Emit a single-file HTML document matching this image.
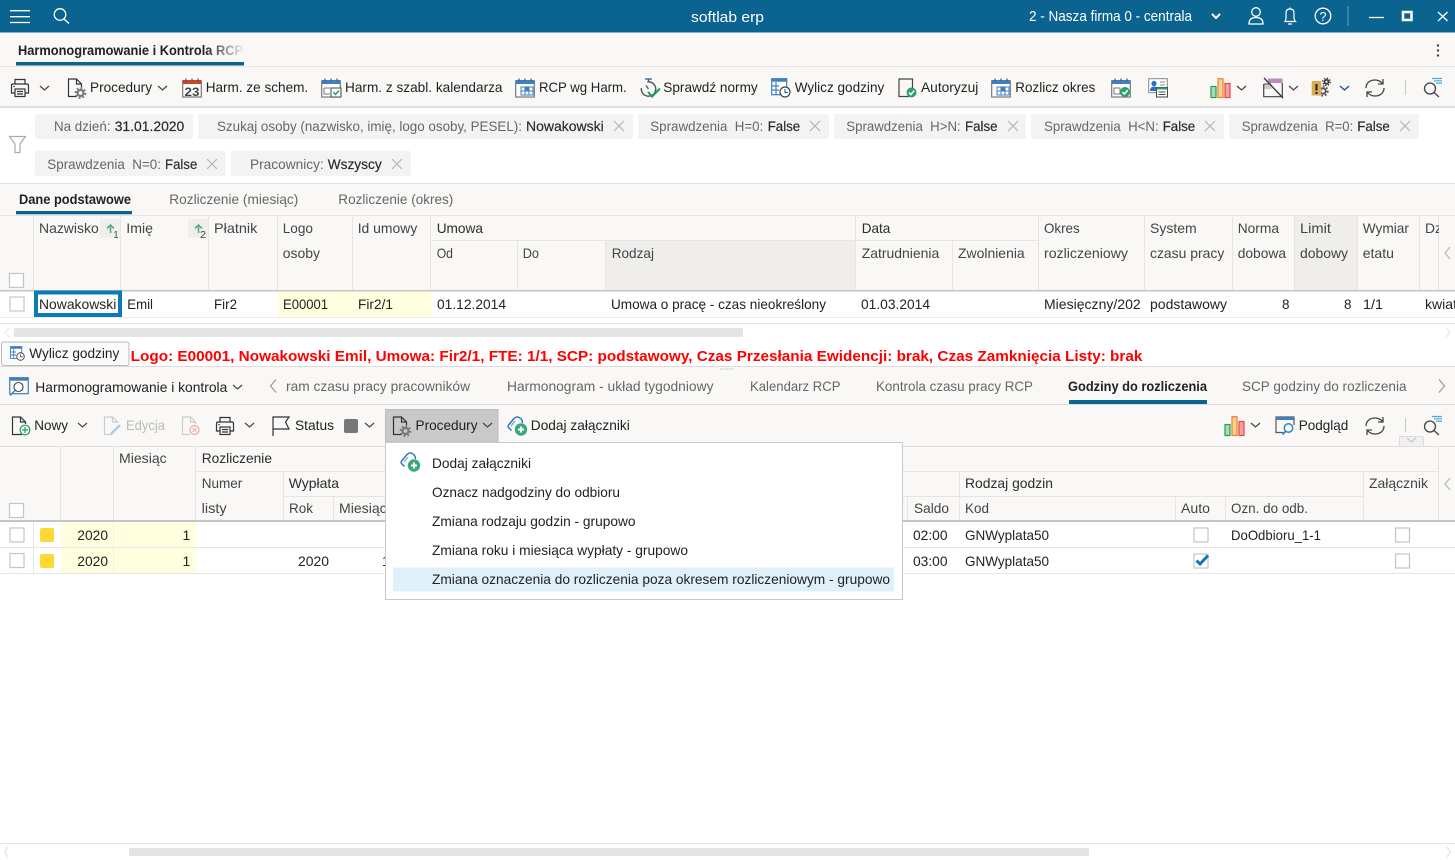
<!DOCTYPE html>
<html lang="pl"><head><meta charset="utf-8"><title>softlab erp</title>
<style>
html,body{margin:0;padding:0;background:#fff;overflow:hidden;width:1455px;height:860px}
svg{display:block}
text{font-family:"Liberation Sans",sans-serif;font-size:14px;fill:#222;white-space:pre}
.w{fill:#fff}.g{fill:#666}.h{fill:#444}.b{font-weight:700}.d{fill:#bbb}.k{fill:#2c2c2c;stroke:#2c2c2c;stroke-width:.2}
.l{stroke:#e6e5e3;stroke-width:1;fill:none}
.cb{fill:#fff;stroke:#c4c4c4;stroke-width:1.2}
.ch{fill:none;stroke:#444;stroke-width:1.2}
.x{stroke:#b5b5b5;stroke-width:1.2;fill:none}
</style></head><body>
<svg xmlns="http://www.w3.org/2000/svg" width="1455" height="860" viewBox="0 0 1455 860">
<defs>
<linearGradient id="fade" gradientUnits="userSpaceOnUse" x1="205" y1="0" x2="244" y2="0"><stop offset="0" stop-color="#222"/><stop offset="1" stop-color="#f0f0f0"/></linearGradient>
<clipPath id="cDz"><rect x="1420" y="216" width="19" height="40"/></clipPath>
<g id="chev"><path class="ch" d="M0 0L4.5 4L9 0"/></g>
<g id="print" fill="none" stroke="#333" stroke-width="1.2"><path d="M5 6V1.5H15V6"/><path d="M5 15H1.5V7.5Q1.500 6 3 6H17Q18.500 6 18.500 7.500V15H15"/><rect x="5" y="11" width="10" height="7.500"/><path d="M7 13.500H13M7 16H13"/><path d="M3 8.500H5" stroke="#2a7ab8"/></g>
<g id="gear"><circle r="3" fill="none" stroke="#777" stroke-width="2.200"/><circle r="5" fill="none" stroke="#777" stroke-width="1.800" stroke-dasharray="1.900 2"/></g>
<g id="docg"><path d="M10 18.500H1.500V1H9.500L14.500 6V9M9.500 1V6H14.500" fill="none" stroke="#333" stroke-width="1.200"/><use href="#gear" x="13.500" y="15"/></g>
<g id="cal"><rect x=".7" y="3" width="18.600" height="16" fill="#fff" stroke="#777" stroke-width="1.200"/><rect x=".7" y="2" width="18.600" height="4" fill="#3f7fbf"/><path d="M4 .5V3M10 .5V3M16 .5V3" stroke="#555" stroke-width="1.200"/></g>
<g id="grid"><rect x="6" y="9" width="12" height="8" fill="#fff" stroke="#3f7fbf"/><path d="M6 13H18M10 9V17M14 9V17" stroke="#3f7fbf"/><rect x="10" y="9" width="4" height="4" fill="#3f7fbf"/></g>
<g id="okc"><circle r="5" fill="#2aa071"/><path d="M-2.500 0L-.7 2L2.700 -1.800" fill="none" stroke="#fff" stroke-width="1.600"/></g>
<g id="bars" stroke-width="1.200"><rect x="1" y="8.500" width="5" height="11" fill="#a8dcb8" stroke="#20a058"/><rect x="8" y=".7" width="5" height="18.800" fill="#fbd28c" stroke="#e8803a"/><rect x="15" y="5.500" width="5" height="14" fill="#f6a0a0" stroke="#e44848"/></g>
<g id="ref" fill="none" stroke="#444" stroke-width="1.300"><path d="M1 10C1 5 5 2 10 2C13 2 16 3.500 18 6M18 1V6H13"/><path d="M19 10C19 15 15 18 10 18C7 18 4 16.500 2 14M2 19V14H7"/></g>
<g id="srch" fill="none"><circle cx="7" cy="11.500" r="5.500" stroke="#444" stroke-width="1.300"/><path d="M11 15.500L16 20" stroke="#444" stroke-width="1.300"/><path d="M9 1.500H19M11 3.800H19M13 6.100H19" stroke="#4aa8e0" stroke-width="1.200"/></g>
<g id="wyl"><rect x=".7" y=".7" width="15" height="16" fill="#fff" stroke="#3f7fbf" stroke-width="1.200"/><rect x=".7" y=".7" width="15" height="3" fill="#3f7fbf"/><path d="M1 8H8M1 12H8M5 4V17" stroke="#3f7fbf" stroke-width="1.200"/><circle cx="14" cy="14" r="5" fill="#fff" stroke="#444" stroke-width="1.200"/><path d="M14 11V14.500H17" fill="none" stroke="#2a6ab0" stroke-width="1.200"/></g>
<g id="cloud"><path d="M4.500 14.500L1.500 11.500Q.5 10 2 8.500L7 2.500Q9.500 0 12 1.500Q15.500 3 15.500 7" fill="none" stroke="#2a70b8" stroke-width="1.400"/><path d="M8 5L4 10" stroke="#7aa8d8" stroke-width="1.400"/><circle cx="14" cy="13.500" r="6.200" fill="#39a87c"/><path d="M14 10.500V16.500M11 13.500H17" stroke="#fff" stroke-width="2"/></g>
</defs>

<!-- top bar -->
<rect width="1455" height="32" fill="#0b6490"/><rect y="32" width="1455" height="1" fill="#7fb0c8"/>
<path d="M10 10.700H30M10 16.700H30M10 22.500H30" stroke="#fff" stroke-width="1.300"/>
<circle cx="60" cy="14.500" r="5.800" fill="none" stroke="#fff" stroke-width="1.300"/><path d="M64 19L69 23.500" stroke="#fff" stroke-width="1.300"/>
<text x="691" y="22" textLength="73" lengthAdjust="spacingAndGlyphs" class="w" style="font-size:15px">softlab erp</text>
<text x="1029" y="21" textLength="163" lengthAdjust="spacingAndGlyphs" class="w" style="font-size:14.5px">2 - Nasza firma 0 - centrala</text>
<path d="M1212 14L1216 18L1220 14" fill="none" stroke="#fff" stroke-width="2"/>
<circle cx="1256" cy="12" r="4.300" fill="none" stroke="#fff" stroke-width="1.300"/><path d="M1249 24Q1249 17.500 1256 17.500Q1263 17.500 1263 24Z" fill="none" stroke="#fff" stroke-width="1.300"/>
<path d="M1285 21.500Q1286 20 1286 17V13Q1286 9 1290 9Q1294 9 1294 13V17Q1294 20 1295.500 21.500ZM1290 9V7.500M1288 24H1292" fill="none" stroke="#fff" stroke-width="1.200"/>
<circle cx="1323" cy="16" r="7.800" fill="none" stroke="#fff" stroke-width="1.300"/>
<text x="1319.500" y="21" textLength="7" lengthAdjust="spacingAndGlyphs" class="w" style="font-size:13px">?</text>
<rect x="1347" y="6" width="2" height="20" fill="#3a82a8"/>
<path d="M1369 17.500H1384" stroke="#fff" stroke-width="1.300"/>
<rect x="1403" y="12" width="8.500" height="8" fill="none" stroke="#fff" stroke-width="2.500"/>
<path d="M1438 12L1447.500 21M1447.500 12L1438 21" stroke="#fff" stroke-width="1.300"/>

<!-- tab strip -->
<rect y="33" width="1455" height="73" fill="#f9f8f6"/>
<text x="18" y="55" textLength="225" lengthAdjust="spacingAndGlyphs" class="b" style="font-size:13.500px;fill:url(#fade)">Harmonogramowanie i Kontrola RCP</text>
<rect x="16" y="62" width="228" height="3.500" fill="#0b6490"/>
<rect y="66" width="1455" height="1" fill="#e8e7e5"/>
<circle cx="1438" cy="45.500" r="1.200" fill="#444"/><circle cx="1438" cy="50.500" r="1.200" fill="#444"/><circle cx="1438" cy="55.500" r="1.200" fill="#444"/>

<!-- toolbar 1 -->
<use href="#print" x="10" y="78"/><use href="#chev" x="40" y="86"/>
<use href="#docg" x="67" y="78"/>
<text x="90" y="92" textLength="62" lengthAdjust="spacingAndGlyphs">Procedury</text><use href="#chev" x="158" y="86"/>
<g transform="translate(182 78)"><rect x=".7" y="3" width="18.600" height="16" fill="#fff" stroke="#777" stroke-width="1.200"/><rect x=".7" y="2" width="18.600" height="4" fill="#c9402c"/><path d="M4 .5V3M10 .5V3M16 .5V3" stroke="#555" stroke-width="1.200"/></g>
<text x="184.500" y="96" textLength="15" lengthAdjust="spacingAndGlyphs" class="b" style="font-size:12px;fill:#444">23</text>
<text x="205.700" y="92" textLength="102.500" lengthAdjust="spacingAndGlyphs">Harm. ze schem.</text>
<use href="#cal" x="321" y="78"/><path d="M324 88H330M324 88V94H330" fill="none" stroke="#777"/><rect x="331" y="88" width="10" height="9" fill="#fff" stroke="#444"/><path d="M333.500 92L335.500 94.500L339 90.500" fill="none" stroke="#2aa071" stroke-width="1.500"/>
<text x="345" y="92" textLength="157.500" lengthAdjust="spacingAndGlyphs">Harm. z szabl. kalendarza</text>
<use href="#cal" x="515" y="78"/><use href="#grid" x="515" y="78"/>
<text x="539" y="92" textLength="87.700" lengthAdjust="spacingAndGlyphs">RCP wg Harm.</text>
<g transform="translate(640 78)" fill="none"><circle cx="8.500" cy="11" r="7.200" stroke="#555" stroke-width="1.400" stroke-dasharray="26 9" transform="rotate(-20 8.500 11)"/><path d="M5 1H12M8.500 1V3.500M8.500 11L6 7.500" stroke="#2a5a90" stroke-width="1.300"/><path d="M8 14L12 18.500L20 10.500" stroke="#1a9a60" stroke-width="2"/></g>
<text x="663.300" y="92" textLength="94.400" lengthAdjust="spacingAndGlyphs">Sprawdź normy</text>
<use href="#wyl" x="771" y="78"/>
<text x="794.700" y="92" textLength="89.600" lengthAdjust="spacingAndGlyphs">Wylicz godziny</text>
<path d="M909 96.500H899V79H912.500V90" fill="none" stroke="#444" stroke-width="1.200"/><use href="#okc" x="911.500" y="92.500"/>
<text x="921" y="92" textLength="57.300" lengthAdjust="spacingAndGlyphs">Autoryzuj</text>
<use href="#cal" x="991" y="78"/><use href="#grid" x="991" y="78"/>
<text x="1015.300" y="92" textLength="80" lengthAdjust="spacingAndGlyphs">Rozlicz okres</text>
<use href="#cal" x="1111" y="78"/><path d="M1114 88H1120V94H1114Z" fill="none" stroke="#777"/><use href="#okc" x="1125" y="92"/>
<g transform="translate(1148 78)"><rect x=".7" y=".7" width="18.600" height="14" fill="#fff" stroke="#888"/><circle cx="6" cy="5.500" r="2.600" fill="#2a70c0"/><path d="M2 13Q2 8.500 6 8.500Q10 8.500 10 13Z" fill="#2a70c0"/><path d="M12 4H17M12 7H17" stroke="#888"/><rect x="8.500" y="9.500" width="11" height="9.500" fill="#fff" stroke="#444"/><rect x="8.500" y="9.500" width="11" height="2" fill="#2aa071"/><path d="M10.500 14H17.500M10.500 16.500H17.500" stroke="#444"/></g>
<use href="#bars" x="1210" y="78"/><use href="#chev" x="1237" y="86"/>
<g transform="translate(1263 78)" fill="none"><rect x="5" y=".5" width="14.500" height="4.500" fill="#c088c0"/><rect x="1" y="6" width="7.500" height="5" fill="#ccc"/><path d="M.7 6V18.700H19.300V5" stroke="#444" stroke-width="1.200"/><path d="M.7 6H8" stroke="#555"/><path d="M1 0L20 20" stroke="#333" stroke-width="1.300"/></g>
<use href="#chev" x="1289" y="86"/>
<g transform="translate(1311 78)"><circle cx="12" cy="13" r="2.800" fill="none" stroke="#555" stroke-width="2"/><circle cx="12" cy="13" r="4.800" fill="none" stroke="#555" stroke-width="1.700" stroke-dasharray="1.800 1.900"/><rect x=".7" y="3" width="9.500" height="14.500" rx="1" fill="#dcaa50"/><path d="M5.500 6V12.500M5.500 14V16" stroke="#222" stroke-width="2"/><circle cx="15.500" cy="3.800" r="2" fill="none" stroke="#333" stroke-width="1.600"/><circle cx="15.500" cy="3.800" r="3.600" fill="none" stroke="#333" stroke-width="1.400" stroke-dasharray="1.400 1.450"/></g>
<path d="M1340 86L1344.500 90L1349 86" fill="none" stroke="#1f4f90" stroke-width="1.300"/>
<use href="#ref" x="1365" y="78"/>
<rect x="1405" y="80" width="1" height="15" fill="#c8c8c8"/>
<use href="#srch" x="1423" y="77"/>
<rect y="106" width="1455" height="2" fill="#dedddb"/>

<!-- filters -->
<path d="M9.500 136.500H25.500L20 144V152.500H15V144Z" fill="none" stroke="#aaa" stroke-width="1.200"/>
<g fill="#f3f3f3">
<rect x="35" y="114" width="158" height="25" rx="2"/><rect x="198" y="114" width="435" height="25" rx="2"/><rect x="638" y="114" width="191" height="25" rx="2"/><rect x="834" y="114" width="192" height="25" rx="2"/><rect x="1031" y="114" width="193" height="25" rx="2"/><rect x="1229" y="114" width="190" height="25" rx="2"/><rect x="35" y="151" width="191" height="25" rx="2"/><rect x="231" y="151" width="180" height="25" rx="2"/>
</g>
<text x="54" y="131" textLength="56.500" lengthAdjust="spacingAndGlyphs" class="g">Na dzień:</text><text x="114.700" y="131" textLength="69.600" lengthAdjust="spacingAndGlyphs" class="k">31.01.2020</text>
<text x="217" y="131" textLength="305" lengthAdjust="spacingAndGlyphs" class="g">Szukaj osoby (nazwisko, imię, logo osoby, PESEL):</text><text x="526" y="131" textLength="77.700" lengthAdjust="spacingAndGlyphs" class="k">Nowakowski</text>
<text x="650.300" y="131" textLength="113" lengthAdjust="spacingAndGlyphs" class="g">Sprawdzenia  H=0:</text><text x="767.700" y="131" textLength="32.500" lengthAdjust="spacingAndGlyphs" class="k">False</text>
<text x="846.300" y="131" textLength="114.400" lengthAdjust="spacingAndGlyphs" class="g">Sprawdzenia  H&gt;N:</text><text x="965" y="131" textLength="32.500" lengthAdjust="spacingAndGlyphs" class="k">False</text>
<text x="1044" y="131" textLength="114.700" lengthAdjust="spacingAndGlyphs" class="g">Sprawdzenia  H&lt;N:</text><text x="1162.700" y="131" textLength="32.500" lengthAdjust="spacingAndGlyphs" class="k">False</text>
<text x="1241.700" y="131" textLength="111.600" lengthAdjust="spacingAndGlyphs" class="g">Sprawdzenia  R=0:</text><text x="1357.300" y="131" textLength="32.500" lengthAdjust="spacingAndGlyphs" class="k">False</text>
<text x="47.300" y="169" textLength="113.700" lengthAdjust="spacingAndGlyphs" class="g">Sprawdzenia  N=0:</text><text x="165" y="169" textLength="32.300" lengthAdjust="spacingAndGlyphs" class="k">False</text>
<text x="250" y="169" textLength="73.700" lengthAdjust="spacingAndGlyphs" class="g">Pracownicy:</text><text x="327.700" y="169" textLength="54" lengthAdjust="spacingAndGlyphs" class="k">Wszyscy</text>
<path class="x" d="M614 121L624 131M624 121L614 131M810 121L820 131M820 121L810 131M1008 121L1018 131M1018 121L1008 131M1205 121L1215 131M1215 121L1205 131M1400 121L1410 131M1410 121L1400 131M207 159L217 169M217 159L207 169M392 159L402 169M402 159L392 169"/>
<rect y="183" width="1455" height="1" fill="#e4e3e1"/>

<!-- tabs 2 -->
<rect y="184" width="1455" height="106" fill="#f9f8f6"/>
<text x="19" y="204" textLength="112" lengthAdjust="spacingAndGlyphs" class="b">Dane podstawowe</text>
<text x="169.300" y="204" textLength="129" lengthAdjust="spacingAndGlyphs" class="g">Rozliczenie (miesiąc)</text>
<text x="338.300" y="204" textLength="115" lengthAdjust="spacingAndGlyphs" class="g">Rozliczenie (okres)</text>
<rect x="16" y="211" width="116" height="3.300" fill="#0b6490"/>
<rect y="215" width="1455" height="1" fill="#e6e5e3"/>

<!-- table 1 header -->
<rect x="606" y="241" width="249" height="49" fill="#efeeec"/><rect x="1295" y="216" width="62" height="74" fill="#efeeec"/>
<path class="l" d="M33.500 216V290M120.500 216V290M208.500 216V290M277.500 216V290M352.500 216V290M430.500 216V290M517.500 241V290M605.500 241V290M855.500 216V290M952.500 241V290M1038.500 216V290M1144.500 216V290M1232.500 216V290M1294.500 216V290M1357.500 216V290M1419.500 216V290M1438.500 216V290M431 240.500H1038"/>
<rect x="100" y="219" width="20" height="19" fill="#f0efed"/><rect x="188" y="219" width="20" height="19" fill="#f0efed"/>
<path d="M110.500 233V225M107 228.500L110.500 225L114 228.500M198.500 233V225M195 228.500L198.500 225L202 228.500" fill="none" stroke="#4aa87a" stroke-width="1.500"/>
<text x="113.500" y="238" textLength="5" lengthAdjust="spacingAndGlyphs" class="h" style="font-size:10px">1</text><text x="200" y="238" textLength="6" lengthAdjust="spacingAndGlyphs" class="h" style="font-size:10px">2</text>
<g class="h">
<text class="h" x="39" y="233" textLength="59.700" lengthAdjust="spacingAndGlyphs">Nazwisko</text>
<text class="h" x="126.300" y="233" textLength="26.700" lengthAdjust="spacingAndGlyphs">Imię</text>
<text class="h" x="214" y="233" textLength="43.300" lengthAdjust="spacingAndGlyphs">Płatnik</text>
<text class="h" x="282.700" y="233" textLength="30.300" lengthAdjust="spacingAndGlyphs">Logo</text>
<text class="h" x="282.700" y="258" textLength="37.300" lengthAdjust="spacingAndGlyphs">osoby</text>
<text class="h" x="357.700" y="233" textLength="59.600" lengthAdjust="spacingAndGlyphs">Id umowy</text>
<text class="h" x="436.700" y="233" textLength="46.300" lengthAdjust="spacingAndGlyphs" style="fill:#2c2c2c">Umowa</text>
<text class="h" x="436.700" y="258" textLength="16.300" lengthAdjust="spacingAndGlyphs">Od</text>
<text class="h" x="522.700" y="258" textLength="16.300" lengthAdjust="spacingAndGlyphs">Do</text>
<text class="h" x="611.700" y="258" textLength="42.300" lengthAdjust="spacingAndGlyphs">Rodzaj</text>
<text class="h" x="861.700" y="233" textLength="28.600" lengthAdjust="spacingAndGlyphs" style="fill:#2c2c2c">Data</text>
<text class="h" x="861.700" y="258" textLength="77.600" lengthAdjust="spacingAndGlyphs">Zatrudnienia</text>
<text class="h" x="958" y="258" textLength="66.700" lengthAdjust="spacingAndGlyphs">Zwolnienia</text>
<text class="h" x="1044" y="233" textLength="35.700" lengthAdjust="spacingAndGlyphs">Okres</text>
<text class="h" x="1044" y="258" textLength="84" lengthAdjust="spacingAndGlyphs">rozliczeniowy</text>
<text class="h" x="1150" y="233" textLength="46.700" lengthAdjust="spacingAndGlyphs">System</text>
<text class="h" x="1150" y="258" textLength="74.300" lengthAdjust="spacingAndGlyphs">czasu pracy</text>
<text class="h" x="1237.700" y="233" textLength="41.300" lengthAdjust="spacingAndGlyphs">Norma</text>
<text class="h" x="1237.700" y="258" textLength="48.300" lengthAdjust="spacingAndGlyphs">dobowa</text>
<text class="h" x="1300" y="233" textLength="31" lengthAdjust="spacingAndGlyphs">Limit</text>
<text class="h" x="1300" y="258" textLength="48" lengthAdjust="spacingAndGlyphs">dobowy</text>
<text class="h" x="1362.700" y="233" textLength="46.300" lengthAdjust="spacingAndGlyphs">Wymiar</text>
<text class="h" x="1362.700" y="258" textLength="31.300" lengthAdjust="spacingAndGlyphs">etatu</text>
<text class="h" x="1425" y="233" textLength="17" lengthAdjust="spacingAndGlyphs" clip-path="url(#cDz)">Dz</text>
</g>
<path d="M1450 247L1445 253L1450 259" fill="none" stroke="#bbb" stroke-width="1.300"/>
<rect x="9.500" y="273.500" width="14" height="14" class="cb"/>
<rect y="290" width="1455" height="1.500" fill="#c4c4c4"/>

<!-- table 1 row -->
<rect x="278" y="291.500" width="153.500" height="25.500" fill="#ffffe0"/>
<rect x="10" y="297" width="14" height="14" class="cb"/>
<rect x="36" y="292.500" width="84" height="22.500" fill="#fff" stroke="#0b7ab5" stroke-width="4"/>
<text x="39" y="309" textLength="77.300" lengthAdjust="spacingAndGlyphs">Nowakowski</text>
<text x="127.300" y="309" textLength="25.700" lengthAdjust="spacingAndGlyphs">Emil</text>
<text x="214" y="309" textLength="23" lengthAdjust="spacingAndGlyphs">Fir2</text>
<text x="283" y="309" textLength="45" lengthAdjust="spacingAndGlyphs">E00001</text>
<text x="358" y="309" textLength="35" lengthAdjust="spacingAndGlyphs">Fir2/1</text>
<text x="437" y="309" textLength="69" lengthAdjust="spacingAndGlyphs">01.12.2014</text>
<text x="611" y="309" textLength="215" lengthAdjust="spacingAndGlyphs">Umowa o pracę - czas nieokreślony</text>
<text x="861" y="309" textLength="69" lengthAdjust="spacingAndGlyphs">01.03.2014</text>
<text x="1044" y="309" textLength="96.700" lengthAdjust="spacingAndGlyphs">Miesięczny/202</text>
<text x="1150" y="309" textLength="77" lengthAdjust="spacingAndGlyphs">podstawowy</text>
<text x="1282" y="309" textLength="7.500" lengthAdjust="spacingAndGlyphs">8</text>
<text x="1344" y="309" textLength="7.500" lengthAdjust="spacingAndGlyphs">8</text>
<text x="1363" y="309" textLength="20" lengthAdjust="spacingAndGlyphs">1/1</text>
<text x="1425" y="309" textLength="32" lengthAdjust="spacingAndGlyphs">kwiat</text>
<rect y="317" width="1455" height="1" fill="#ecebe9"/>
<rect y="323" width="1455" height="1" fill="#e4e3e1"/>
<path d="M9 328L5 332.500L9 337M1446 328L1450 332.500L1446 337" fill="none" stroke="#e8e8e8" stroke-width="1.200"/>
<rect x="14" y="328" width="729" height="9" fill="#e4e4e4"/>

<!-- status row -->
<rect x="1.500" y="342" width="127.500" height="23.500" rx="2" fill="#fafafa" stroke="#bbb"/>
<use href="#wyl" transform="translate(10 346) scale(.75)"/>
<text x="29.300" y="358" textLength="90" lengthAdjust="spacingAndGlyphs" fill="#333">Wylicz godziny</text>
<text x="130.700" y="361" textLength="1011.700" lengthAdjust="spacingAndGlyphs" class="b" style="fill:#f00;font-size:14.500px">Logo: E00001, Nowakowski Emil, Umowa: Fir2/1, FTE: 1/1, SCP: podstawowy, Czas Przesłania Ewidencji: brak, Czas Zamknięcia Listy: brak</text>
<rect y="366" width="1455" height="1" fill="#dedddb"/>

<!-- lower tabs + toolbar -->
<rect y="367" width="1455" height="153" fill="#f9f8f6"/>
<path d="M720 369H734" stroke="#ccc" stroke-dasharray="4 1"/>
<g transform="translate(9 377)" fill="none"><rect x=".7" y=".7" width="18.600" height="16" stroke="#3f7fbf" stroke-width="1.200"/><rect x=".7" y=".7" width="18.600" height="3" fill="#3f7fbf"/><circle cx="9.500" cy="10" r="4.500" fill="#fff" stroke="#444" stroke-width="1.100"/><path d="M6 13.500L1 18.500" stroke="#2a8ad0" stroke-width="1.500"/></g>
<text x="35.300" y="392" textLength="192" lengthAdjust="spacingAndGlyphs">Harmonogramowanie i kontrola</text>
<use href="#chev" x="233" y="385"/>
<path d="M276 379.500L270.500 386L276 392.500M1439 379.500L1444.500 386L1439 392.500" fill="none" stroke="#999" stroke-width="1.200"/>
<text x="286" y="391" textLength="184" lengthAdjust="spacingAndGlyphs" class="g">ram czasu pracy pracowników</text>
<text x="507" y="391" textLength="206.500" lengthAdjust="spacingAndGlyphs" class="g">Harmonogram - układ tygodniowy</text>
<text x="750" y="391" textLength="90.500" lengthAdjust="spacingAndGlyphs" class="g">Kalendarz RCP</text>
<text x="876" y="391" textLength="157" lengthAdjust="spacingAndGlyphs" class="g">Kontrola czasu pracy RCP</text>
<text x="1068" y="391" textLength="139" lengthAdjust="spacingAndGlyphs" class="b">Godziny do rozliczenia</text>
<text x="1242" y="391" textLength="164.500" lengthAdjust="spacingAndGlyphs" class="g">SCP godziny do rozliczenia</text>
<rect x="1069" y="400" width="138" height="4" fill="#0b6490"/>
<rect y="404" width="1455" height="1" fill="#e0dfdd"/>

<g transform="translate(11 416)"><path d="M11 18.500H1.500V1H9.500L14.500 6V8M9.500 1V6H14.500" fill="none" stroke="#333" stroke-width="1.200"/><circle cx="14" cy="14" r="4.800" fill="#fff" stroke="#20a058" stroke-width="1.200"/><path d="M14 11V17M11 14H17" stroke="#20a058" stroke-width="1.200"/></g>
<text x="34.300" y="430" textLength="33.700" lengthAdjust="spacingAndGlyphs">Nowy</text><use href="#chev" x="78" y="423"/>
<g transform="translate(103 416)" fill="none"><path d="M9 18.500H1.500V1H9.500L14.500 6V7M9.500 1V6H14.500" stroke="#ccc" stroke-width="1.200"/><path d="M8 18L17 9" stroke="#a8cce8" stroke-width="2.500"/></g>
<text x="126" y="430" textLength="39" lengthAdjust="spacingAndGlyphs" class="d">Edycja</text>
<g transform="translate(181 416)" fill="none"><path d="M9 18.500H1.500V1H9.500L14.500 6V8M9.500 1V6H14.500" stroke="#ccc" stroke-width="1.200"/><circle cx="13.500" cy="14" r="4.500" stroke="#f0a8a8" stroke-width="1.200"/><path d="M11.500 12L15.500 16M15.500 12L11.500 16" stroke="#f0a8a8"/></g>
<use href="#print" x="215" y="416"/><use href="#chev" x="245" y="423"/>
<path d="M273 436V417H289L285.500 422L289 429H273" fill="none" stroke="#333" stroke-width="1.200"/>
<text x="295" y="430" textLength="39" lengthAdjust="spacingAndGlyphs">Status</text>
<rect x="344" y="419" width="14" height="14" rx="2" fill="#777"/><use href="#chev" x="365" y="423"/>
<rect x="385.500" y="409.500" width="112.500" height="32.500" fill="#c9c9c9" stroke="#bdbdbd"/>
<use href="#docg" x="392" y="416"/>
<text x="415.500" y="430" textLength="62" lengthAdjust="spacingAndGlyphs">Procedury</text><use href="#chev" x="483" y="423"/>
<use href="#cloud" x="507" y="416"/>
<text x="530.800" y="430" textLength="99" lengthAdjust="spacingAndGlyphs">Dodaj załączniki</text>
<use href="#bars" x="1224" y="416"/><use href="#chev" x="1251" y="423"/>
<g transform="translate(1275 416)" fill="none"><path d="M8 16.500H1V1H19V9" stroke="#555" stroke-width="1.200"/><rect x="1" y="1" width="18" height="3" fill="#3f7fbf"/><circle cx="13.500" cy="12" r="4.200" fill="#fff" stroke="#2a80c8" stroke-width="1.500"/><path d="M10.500 15.500L7.500 18.500" stroke="#2a80c8" stroke-width="1.800"/></g>
<text x="1298.700" y="430" textLength="49.600" lengthAdjust="spacingAndGlyphs">Podgląd</text>
<use href="#ref" x="1365" y="416"/>
<rect x="1405" y="418" width="1" height="14" fill="#c8c8c8"/>
<use href="#srch" x="1423" y="415"/>
<path d="M1399.500 446V438Q1399.500 436.500 1401 436.500H1422Q1423.500 436.500 1423.500 438V446" fill="#f1f0ee" stroke="#ddd"/>
<path d="M1407 438L1411.500 442L1416 438" fill="none" stroke="#bbb"/>
<rect y="446" width="1455" height="1" fill="#e0dfdd"/>

<!-- table 2 header -->
<path class="l" d="M60.500 447V520M113.500 447V520M195.500 447V520M283.500 472V520M333.500 497V520M907.500 497V520M959.500 472V520M1175.500 497V520M1225.500 497V520M1363.500 472V520M1438.500 447V520M195.500 471.500H1438M283.500 496.500H1363"/>
<text class="h" x="119" y="463" textLength="47.700" lengthAdjust="spacingAndGlyphs">Miesiąc</text>
<text class="h" x="201.700" y="463" textLength="70.300" lengthAdjust="spacingAndGlyphs" style="fill:#2c2c2c">Rozliczenie</text>
<text class="h" x="201.700" y="488" textLength="40.600" lengthAdjust="spacingAndGlyphs">Numer</text>
<text class="h" x="288.700" y="488" textLength="50.300" lengthAdjust="spacingAndGlyphs" style="fill:#2c2c2c">Wypłata</text>
<text class="h" x="201.700" y="513" textLength="25" lengthAdjust="spacingAndGlyphs">listy</text>
<text class="h" x="289" y="513" textLength="24" lengthAdjust="spacingAndGlyphs">Rok</text>
<text class="h" x="339" y="513" textLength="47.700" lengthAdjust="spacingAndGlyphs">Miesiąc</text>
<text class="h" x="914" y="513" textLength="35" lengthAdjust="spacingAndGlyphs">Saldo</text>
<text class="h" x="965" y="488" textLength="88" lengthAdjust="spacingAndGlyphs" style="fill:#2c2c2c">Rodzaj godzin</text>
<text class="h" x="965" y="513" textLength="24" lengthAdjust="spacingAndGlyphs">Kod</text>
<text class="h" x="1181" y="513" textLength="29" lengthAdjust="spacingAndGlyphs">Auto</text>
<text class="h" x="1231" y="513" textLength="77" lengthAdjust="spacingAndGlyphs">Ozn. do odb.</text>
<text class="h" x="1369" y="488" textLength="59" lengthAdjust="spacingAndGlyphs">Załącznik</text>
<path d="M1450 478L1445 484L1450 490" fill="none" stroke="#bbb" stroke-width="1.300"/>
<rect x="9.500" y="503.500" width="14" height="14" class="cb"/>
<rect y="520" width="1455" height="2" fill="#c4c4c4"/>

<!-- table 2 rows -->
<rect x="61" y="522" width="135" height="25" fill="#ffffe0"/><rect x="61" y="548" width="135" height="25" fill="#ffffe0"/>
<path class="l" d="M33.500 522V573M0 547.500H1455M0 573.500H1455"/>
<path d="M113.500 522V573" stroke="#f3f3d8" fill="none"/>
<rect x="10" y="528" width="14" height="14" class="cb"/><rect x="10" y="553.500" width="14" height="14" class="cb"/>
<rect x="40" y="528" width="14" height="14" rx="2" fill="#fdd835"/><rect x="40" y="554" width="14" height="14" rx="2" fill="#fdd835"/>
<text x="77.300" y="540" textLength="30.700" lengthAdjust="spacingAndGlyphs">2020</text><text x="182.500" y="540">1</text>
<text x="77.300" y="566" textLength="30.700" lengthAdjust="spacingAndGlyphs">2020</text><text x="182.500" y="566">1</text>
<text x="298" y="566" textLength="31" lengthAdjust="spacingAndGlyphs">2020</text><text x="382" y="566">1</text>
<text x="913" y="540" textLength="34.500" lengthAdjust="spacingAndGlyphs">02:00</text><text x="913" y="566" textLength="34.500" lengthAdjust="spacingAndGlyphs">03:00</text>
<text x="965" y="540" textLength="84" lengthAdjust="spacingAndGlyphs">GNWyplata50</text><text x="965" y="566" textLength="84" lengthAdjust="spacingAndGlyphs">GNWyplata50</text>
<rect x="1194" y="528" width="14" height="14" class="cb"/><rect x="1194" y="554" width="14" height="14" class="cb"/>
<path d="M1196.500 560.500L1200 564L1208 555.500" fill="none" stroke="#0b7ab5" stroke-width="3"/>
<text x="1231" y="540" textLength="90" lengthAdjust="spacingAndGlyphs">DoOdbioru_1-1</text>
<rect x="1395.500" y="528" width="14" height="14" class="cb"/><rect x="1395.500" y="554" width="14" height="14" class="cb"/>

<!-- dropdown menu -->
<rect x="385.500" y="442.500" width="517" height="157" fill="#fff" stroke="#c8c8c8"/>
<rect x="393" y="567.500" width="501" height="24" fill="#e0f0f9"/>
<use href="#cloud" x="400" y="452"/>
<text x="432" y="468" textLength="99" lengthAdjust="spacingAndGlyphs">Dodaj załączniki</text>
<text x="432" y="497" textLength="188" lengthAdjust="spacingAndGlyphs">Oznacz nadgodziny do odbioru</text>
<text x="432" y="526" textLength="203.500" lengthAdjust="spacingAndGlyphs">Zmiana rodzaju godzin - grupowo</text>
<text x="432" y="555" textLength="256" lengthAdjust="spacingAndGlyphs">Zmiana roku i miesiąca wypłaty - grupowo</text>
<text x="432" y="584" textLength="458" lengthAdjust="spacingAndGlyphs">Zmiana oznaczenia do rozliczenia poza okresem rozliczeniowym - grupowo</text>

<!-- bottom scrollbar -->
<rect y="843" width="1455" height="1" fill="#e4e3e1"/>
<path d="M8 847L4.500 852L8 857M1447 847L1450.500 852L1447 857" fill="none" stroke="#e2e2e2" stroke-width="1.200"/>
<rect x="129" y="848" width="960" height="8" fill="#e4e4e4"/>
</svg>
</body></html>
